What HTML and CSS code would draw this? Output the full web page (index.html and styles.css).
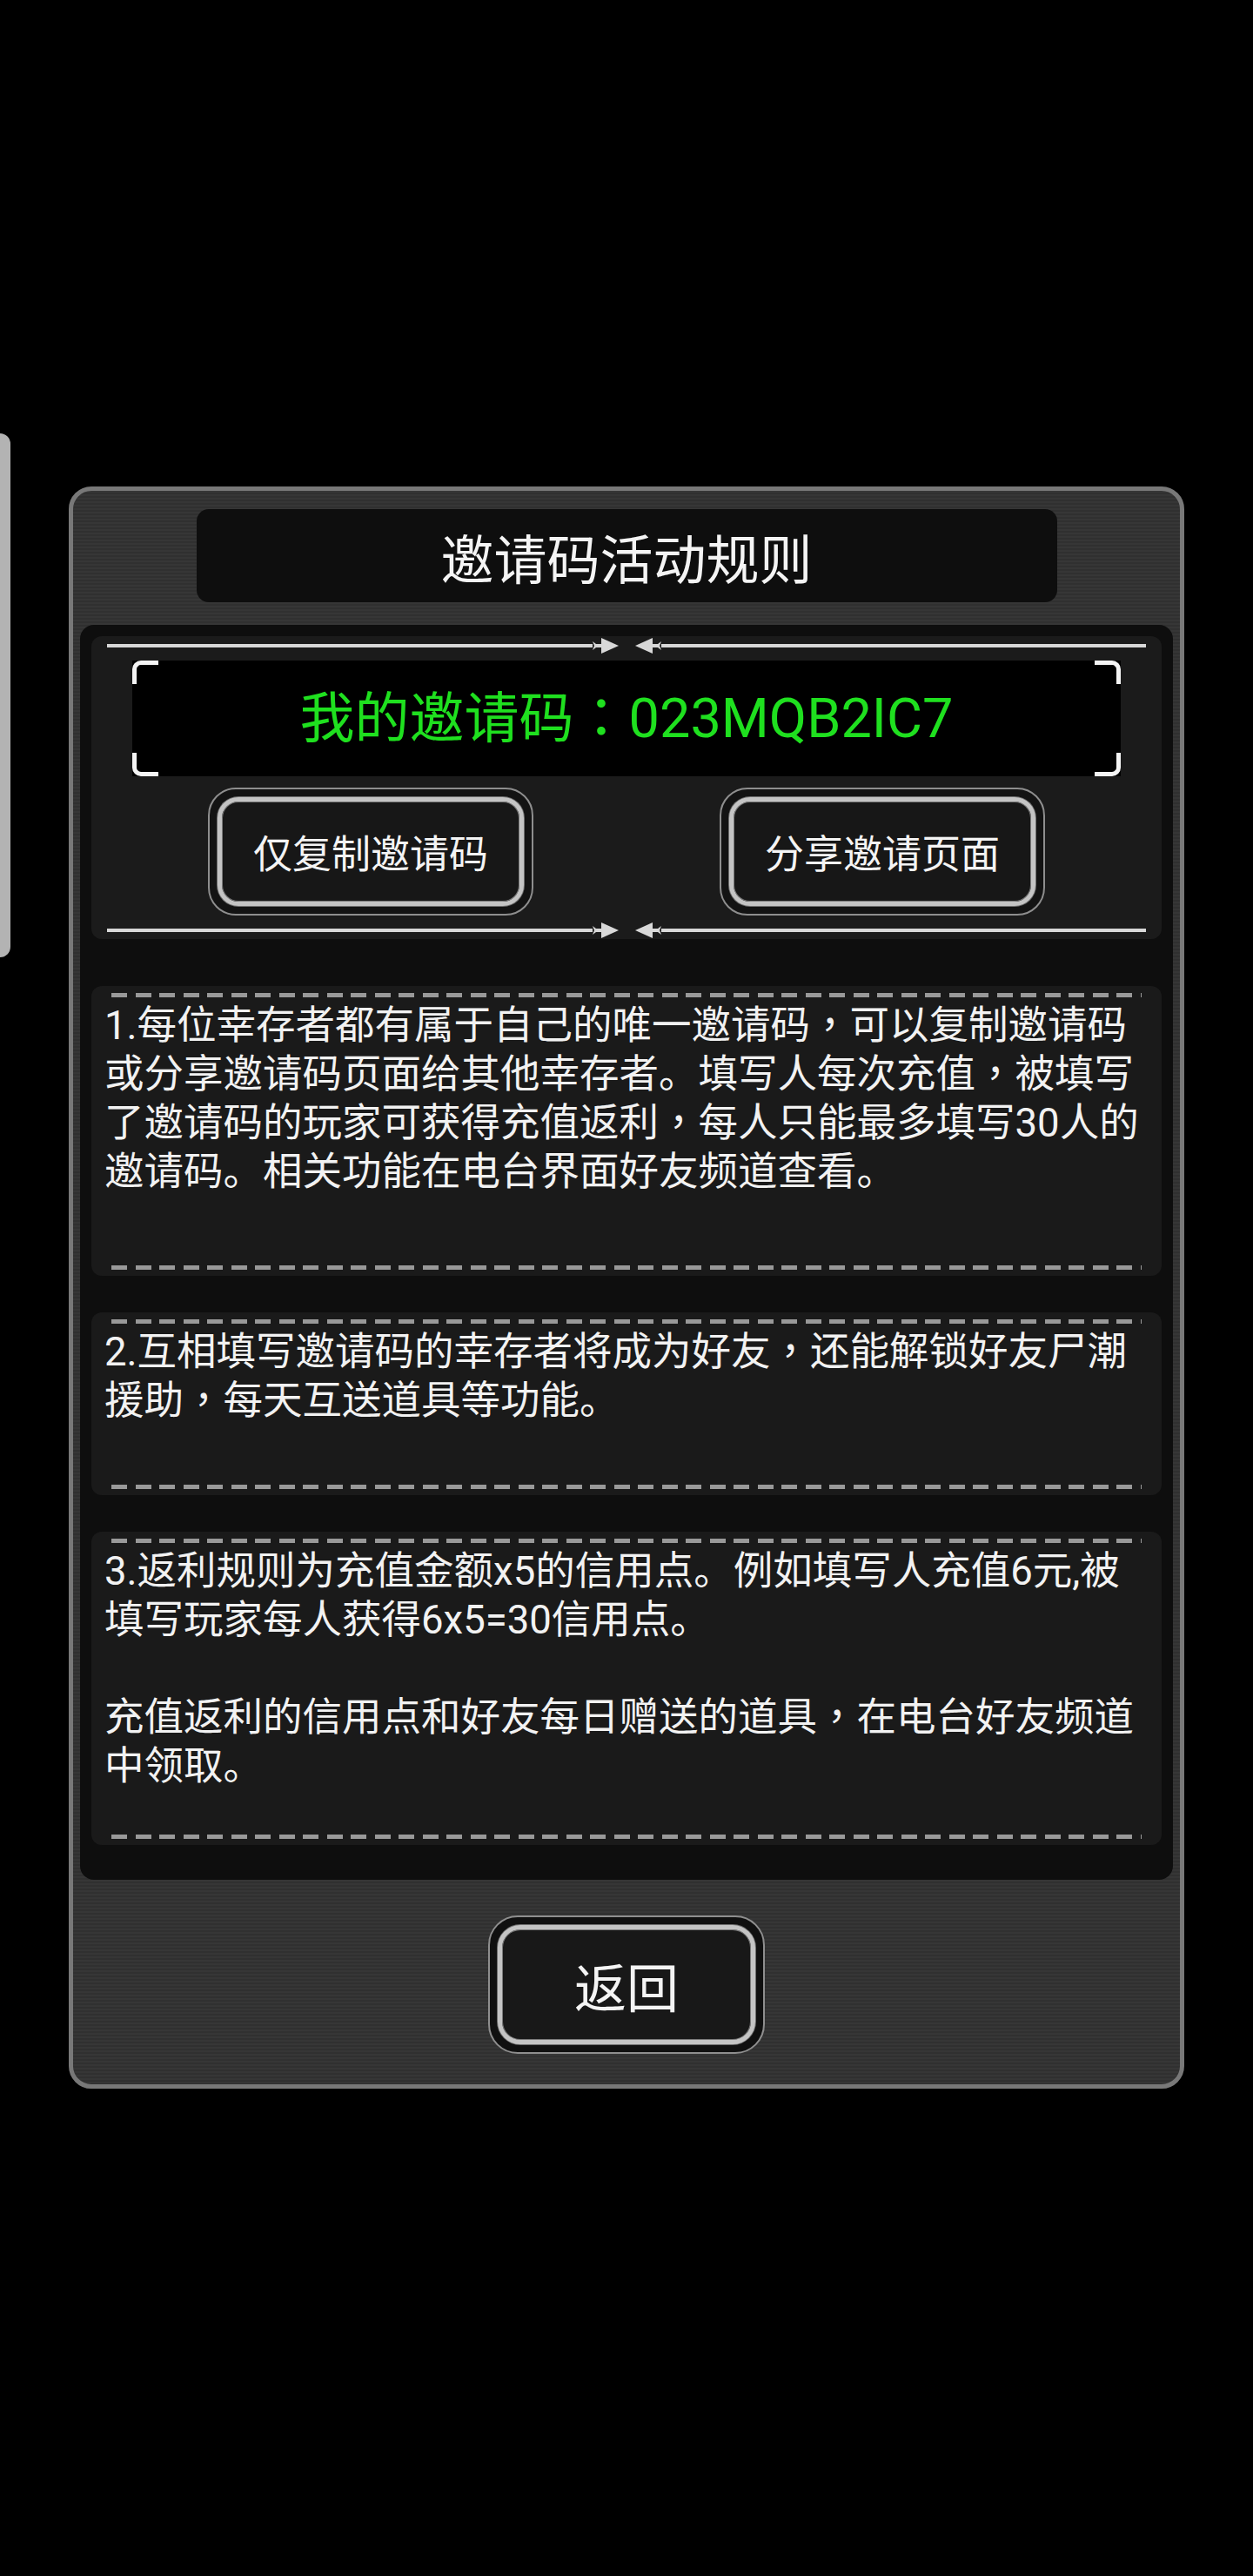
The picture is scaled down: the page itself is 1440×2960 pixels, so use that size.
FILE: index.html
```html
<!DOCTYPE html>
<html lang="zh-CN">
<head>
<meta charset="utf-8">
<title>邀请码活动规则</title>
<link rel="stylesheet" href="styles.css">
</head>
<body>
<div class="edge-handle"></div>
<div class="screen">
  <div class="panel">
    <div class="title-bar">邀请码活动规则</div>
    <div class="inner">
      <div class="code-section">
        <div class="divider">
          <span class="div-line"></span>
          <svg class="arrow" viewBox="0 0 30 20" width="30" height="20"><path d="M0 5 L4 8 L10 8 L10 12 L4 12 L0 15 L2 10 Z" fill="#d8d8d8"/><path d="M10 1 L30 10 L10 19 Z" fill="#d8d8d8"/></svg>
          <span class="div-gap"></span>
          <svg class="arrow" viewBox="0 0 30 20" width="30" height="20"><path d="M30 5 L26 8 L20 8 L20 12 L26 12 L30 15 L28 10 Z" fill="#d8d8d8"/><path d="M20 1 L0 10 L20 19 Z" fill="#d8d8d8"/></svg>
          <span class="div-line"></span>
        </div>
        <div class="code-box">
          <span class="corner tl"></span>
          <span class="corner tr"></span>
          <span class="corner bl"></span>
          <span class="corner br"></span>
          <span class="code-text">我的邀请码<span class="p" lang="zh-Hant">：</span>023MQB2IC7</span>
        </div>
        <div class="btn-row">
          <div class="btn"><div class="btn-inner">仅复制邀请码</div></div>
          <div class="btn"><div class="btn-inner">分享邀请页面</div></div>
        </div>
        <div class="divider">
          <span class="div-line"></span>
          <svg class="arrow" viewBox="0 0 30 20" width="30" height="20"><path d="M0 5 L4 8 L10 8 L10 12 L4 12 L0 15 L2 10 Z" fill="#d8d8d8"/><path d="M10 1 L30 10 L10 19 Z" fill="#d8d8d8"/></svg>
          <span class="div-gap"></span>
          <svg class="arrow" viewBox="0 0 30 20" width="30" height="20"><path d="M30 5 L26 8 L20 8 L20 12 L26 12 L30 15 L28 10 Z" fill="#d8d8d8"/><path d="M20 1 L0 10 L20 19 Z" fill="#d8d8d8"/></svg>
          <span class="div-line"></span>
        </div>
      </div>

      <div class="rule rule-1">
        <div class="dash"></div>
        <p class="rule-text">1.每位幸存者都有属于自己的唯一邀请码<span class="p" lang="zh-Hant">，</span>可以复制邀请码<br>或分享邀请码页面给其他幸存者。填写人每次充值<span class="p" lang="zh-Hant">，</span>被填写<br>了邀请码的玩家可获得充值返利<span class="p" lang="zh-Hant">，</span>每人只能最多填写30人的<br>邀请码。相关功能在电台界面好友频道查看。</p>
        <div class="dash dash-bottom"></div>
      </div>

      <div class="rule rule-2">
        <div class="dash"></div>
        <p class="rule-text">2.互相填写邀请码的幸存者将成为好友<span class="p" lang="zh-Hant">，</span>还能解锁好友尸潮<br>援助<span class="p" lang="zh-Hant">，</span>每天互送道具等功能。</p>
        <div class="dash dash-bottom"></div>
      </div>

      <div class="rule rule-3">
        <div class="dash"></div>
        <p class="rule-text">3.返利规则为充值金额x5的信用点。例如填写人充值6元,被<br>填写玩家每人获得6x5=30信用点。<br><br>充值返利的信用点和好友每日赠送的道具<span class="p" lang="zh-Hant">，</span>在电台好友频道<br>中领取。</p>
        <div class="dash dash-bottom"></div>
      </div>
    </div>
    <div class="btn btn-back"><div class="btn-inner">返回</div></div>
  </div>
</div>
</body>
</html>
```

FILE: styles.css
```css
html, body {
  margin: 0;
  padding: 0;
  background: #000;
}
body {
  width: 1440px;
  min-height: 2960px;
  position: relative;
  font-family: Roboto, "Noto Sans CJK SC", "Noto Sans", sans-serif;
  color: #f2f2f2;
}
.p {
  font-family: Roboto, "Noto Sans CJK TC", "Noto Sans CJK SC", sans-serif;
}
.edge-handle {
  position: absolute;
  left: 0;
  top: 498px;
  width: 12px;
  height: 602px;
  background: #b3b3b3;
  border-radius: 0 12px 12px 0;
}
.screen {
  padding-top: 559px;
}
.panel {
  box-sizing: border-box;
  width: 1282px;
  height: 1841px;
  margin: 0 auto;
  border: 5px solid #787878;
  border-radius: 26px;
  padding: 21px 8px 0;
  background: repeating-linear-gradient(180deg, #363636 0px, #363636 2px, #303030 2px, #303030 4px);
}
.title-bar {
  width: 989px;
  height: 107px;
  margin: 0 auto;
  background: #0e0e0e;
  border-radius: 14px;
  display: flex;
  align-items: center;
  justify-content: center;
  font-size: 61px;
  color: #f4f4f4;
  padding-top: 2px;
  box-sizing: border-box;
}
.inner {
  margin-top: 26px;
  background: #0e0e0e;
  border-radius: 16px;
  padding: 13px 13px 40px;
  display: flex;
  flex-direction: column;
}
.code-section {
  background: #1b1b1b;
  border-radius: 12px;
  height: 348px;
  box-sizing: border-box;
  padding-top: 1px;
  display: flex;
  flex-direction: column;
}
.divider {
  display: flex;
  align-items: center;
  height: 20px;
  margin: 0 18px;
}
.divider + .code-box { margin-top: 7px; }
.btn-row + .divider { margin-top: 7px; }
.div-line {
  flex: 1;
  height: 4px;
  background: #d8d8d8;
}
.div-gap {
  width: 19px;
}
.arrow {
  display: block;
  flex: none;
}
.code-box {
  position: relative;
  height: 133px;
  margin: 0 47px;
  background: #000;
  display: flex;
  align-items: center;
  justify-content: center;
}
.code-text {
  color: #1fe01f;
  font-size: 63px;
  line-height: 1;
  white-space: nowrap;
}
.corner {
  position: absolute;
  width: 30px;
  height: 27px;
  box-sizing: border-box;
  border: 0 solid #f4f4f4;
}
.corner.tl { left: 0; top: 0; border-left-width: 5px; border-top-width: 5px; border-top-left-radius: 10px; }
.corner.tr { right: 0; top: 0; border-right-width: 5px; border-top-width: 5px; border-top-right-radius: 10px; }
.corner.bl { left: 0; bottom: 0; border-left-width: 5px; border-bottom-width: 5px; border-bottom-left-radius: 10px; }
.corner.br { right: 0; bottom: 0; border-right-width: 5px; border-bottom-width: 5px; border-bottom-right-radius: 10px; }
.btn-row {
  margin-top: 13px;
  display: flex;
  justify-content: center;
  gap: 214px;
}
.btn {
  box-sizing: border-box;
  width: 374px;
  height: 147px;
  border: 2px solid #8e8e8e;
  border-radius: 32px;
  padding: 9px;
  background: #131313;
}
.btn-inner {
  box-sizing: border-box;
  height: 100%;
  border: 5px solid #c4c4c4;
  border-radius: 24px;
  background: #171717;
  box-shadow: 0 0 0 1px #6e6e6e, inset 0 0 0 1px #7a7a7a;
  display: flex;
  align-items: center;
  justify-content: center;
  font-size: 45px;
  color: #f4f4f4;
  white-space: nowrap;
}
.btn-back {
  width: 318px;
  height: 159px;
  margin: 41px auto 0;
  border-radius: 34px;
  background: #101010;
}
.btn-back .btn-inner {
  font-size: 60px;
  border-radius: 26px;
  background: #181818;
}
.rule {
  background: #1a1a1a;
  border-radius: 12px;
  padding: 8px 0 7px;
  display: flex;
  flex-direction: column;
}
.rule-1 { margin-top: 54px; }
.rule-2, .rule-3 { margin-top: 42px; }
.dash {
  height: 5px;
  margin: 0 23px;
  background: repeating-linear-gradient(90deg, #999 0px, #999 18px, transparent 18px, transparent 27.5px);
}
.rule-text {
  margin: 5px 0 0;
  padding-left: 15px;
  font-size: 45.5px;
  line-height: 56px;
  white-space: nowrap;
  color: #f2f2f2;
}
.rule-1 .dash-bottom { margin-top: 79px; }
.rule-2 .dash-bottom { margin-top: 68px; }
.rule-3 .dash-bottom { margin-top: 50px; }
```
